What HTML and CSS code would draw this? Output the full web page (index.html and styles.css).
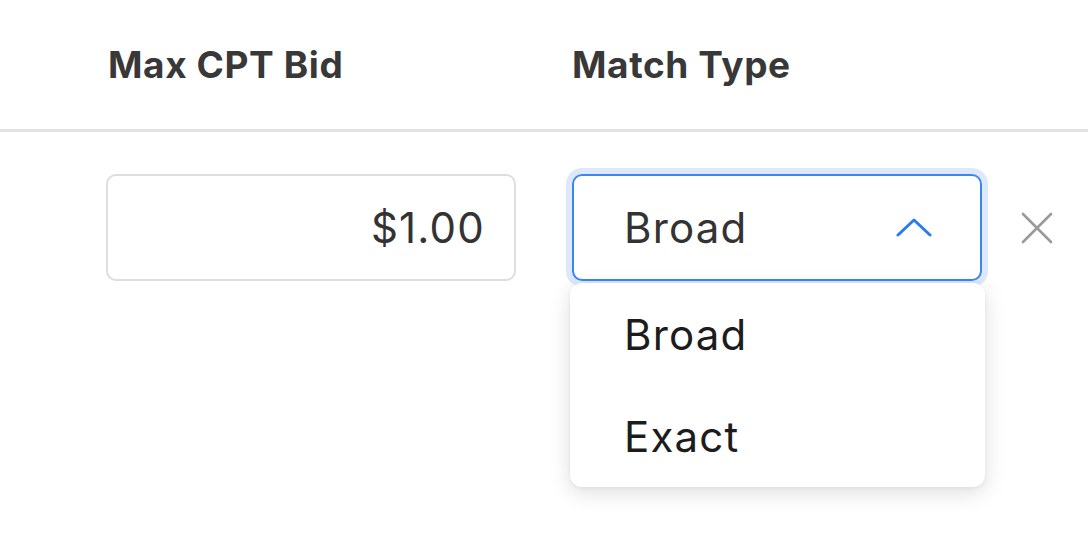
FILE: index.html
```html
<!DOCTYPE html>
<html lang="en">
<head>
    <meta charset="UTF-8">
    <title>Keyword Bid</title>
    <link rel="stylesheet" href="styles.css">
</head>
<body>
    <div class="table">
        <div class="head-row">
            <div class="col col-bid">Max CPT Bid</div>
            <div class="col col-match">Match Type</div>
        </div>

        <div class="row">
            <div class="col col-bid">
                <div class="input">$1.00</div>
            </div>
            <div class="col col-match">
                <div class="select open">
                    <span>Broad</span>
                    <svg class="chevron" width="36" height="20" viewBox="0 0 36 20">
                        <path d="M2 18 L18 3 L34 18" fill="none" stroke="#2a7bf0" stroke-width="3" stroke-linecap="round" stroke-linejoin="round"/>
                    </svg>
                </div>
                <!-- open menu -->
                <div class="menu">
                    <div class="option">Broad</div>
                    <div class="option">Exact</div>
                </div>
            </div>
            <button class="remove" aria-label="Remove">
                <svg width="34" height="34" viewBox="0 0 34 34">
                    <path d="M3 3 L31 31 M31 3 L3 31" stroke="#9a9a9a" stroke-width="2.6" stroke-linecap="round"/>
                </svg>
            </button>
        </div>
    </div>
</body>
</html>
```

FILE: styles.css
```css
body {
    margin: 0;
    font-family: Inter, "Noto Sans", sans-serif;
    background: #fff;
    color: #333;
}
.table {
    width: 100%;
}
.head-row {
    display: flex;
    gap: 56px;
    align-items: center;
    padding-left: 106px;
    border-bottom: 3px solid #e2e2e2;
    box-sizing: border-box;
    height: 132px;
    font-size: 37px;
    font-weight: 700;
    letter-spacing: 0.6px;
    color: #383838;
}
.head-row .col-bid {
    padding-left: 2px;
    width: 408px;
}
.row {
    display: flex;
    gap: 56px;
    align-items: flex-start;
    padding: 42px 0 0 106px;
    height: 407px;
    box-sizing: border-box;
}
.col-bid {
    width: 410px;
}
.col-match {
    position: relative;
    width: 410px;
}
.input {
    height: 107px;
    box-sizing: border-box;
    border: 2.5px solid #dedede;
    border-radius: 10px;
    padding-right: 29px;
    display: flex;
    align-items: center;
    justify-content: flex-end;
    font-size: 42px;
    letter-spacing: 1.2px;
    color: #333;
}
.select {
    height: 107px;
    box-sizing: border-box;
    border: 2.5px solid #3a86f2;
    border-radius: 10px;
    box-shadow: 0 0 0 6px #dde9fb;
    padding: 0 48px 0 50px;
    display: flex;
    align-items: center;
    justify-content: space-between;
    font-size: 42px;
    letter-spacing: 1.2px;
    color: #333;
}
.chevron {
    display: block;
    margin-top: -2px;
}
.menu {
    position: absolute;
    top: 109px;
    left: -2px;
    width: 415px;
    height: 204px;
    box-sizing: border-box;
    background: #fff;
    border-radius: 12px;
    box-shadow: 0 6px 22px rgba(0, 0, 0, 0.13), 0 1px 4px rgba(0, 0, 0, 0.06);
    padding-top: 8px;
}
.option {
    height: 102px;
    line-height: 88px;
    padding-left: 54px;
    font-size: 42px;
    letter-spacing: 1.2px;
    color: #1c1c1c;
}
.remove {
    margin: 37px 0 0 -18px;
    padding: 0;
    border: none;
    background: none;
}
.remove svg {
    display: block;
}
```
